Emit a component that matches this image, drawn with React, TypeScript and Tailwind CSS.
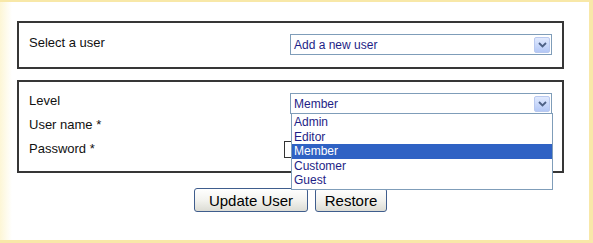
import React from "react";

function Arrow() {
  return (
    <div className="w-[16px] h-[16px] rounded-[2px] border border-[#b9c9ef] bg-gradient-to-b from-[#e1eafe] to-[#b4c8f6] flex items-center justify-center">
      <svg width="9" height="6" viewBox="0 0 9 6">
        <path d="M1 1 L4.5 4.5 L8 1" fill="none" stroke="#4d6185" strokeWidth="1.8" />
      </svg>
    </div>
  );
}

function Select({ value }: { value: string }) {
  return (
    <div className="w-[262px] h-[21px] border border-[#7f9db9] bg-white flex items-center justify-between pl-[3px] pr-[1px]">
      <span className="text-[12px] text-[#1e1e86]">{value}</span>
      <Arrow />
    </div>
  );
}

export default function App() {
  const items = ["Admin", "Editor", "Member", "Customer", "Guest"];
  return (
    <div
      className="relative w-[593px] h-[243px] bg-white border-t-[2px] border-r-[4px] border-b-[3px] border-[#f8e8a8] overflow-hidden"
      style={{ fontFamily: '"Liberation Sans", Arial, sans-serif' }}
    >
      <div className="absolute left-0 top-0 bottom-0 w-[12px] bg-gradient-to-r from-[#fdf6d6] to-white pointer-events-none" />
      <div className="relative pt-[19px] pl-[17px]">
        <div className="w-[547px] h-[48px] border-2 border-[#363636] flex items-start">
          <div className="w-[271px] pl-[10px] pt-[10px] text-[13px] text-[#111]">Select a user</div>
          <div className="pt-[11px]">
            <Select value="Add a new user" />
          </div>
        </div>
        <div className="mt-[11px] w-[547px] h-[93px] border-2 border-[#363636] relative">
          <div className="flex items-start">
            <div className="w-[271px] pl-[10px] pt-[9px] text-[13px] text-[#111]">Level</div>
            <div className="pt-[11px]">
              <Select value="Member" />
            </div>
          </div>
          <div className="flex items-start mt-[3px]">
            <div className="w-[285px] pl-[10px] text-[13px] text-[#111] leading-[16px]">User name *</div>
            <div className="w-[200px] h-[17px] border border-[#333] bg-white" />
          </div>
          <div className="flex items-start mt-[7px]">
            <div className="w-[265px] pl-[10px] text-[13px] text-[#111] leading-[16px]">Password *</div>
            <div className="w-[200px] h-[17px] border border-[#333] bg-white" />
          </div>
          <div className="absolute z-10 left-[272px] top-[31px] w-[262px] border border-[#7f9db9] bg-white py-[1px]">
            {items.map((it) => (
              <div
                key={it}
                className={
                  it === "Member"
                    ? "h-[14.6px] leading-[14.6px] pl-[2px] text-[12px] bg-[#2f62c4] text-white"
                    : "h-[14.6px] leading-[14.6px] pl-[2px] text-[12px] text-[#1e1e86]"
                }
              >
                {it}
              </div>
            ))}
          </div>
        </div>
        <div className="w-[547px] flex justify-center gap-[7px] mt-[15px]">
          <button className="w-[114px] h-[24px] rounded-[3px] border border-[#3f5d8d] bg-gradient-to-b from-white via-[#f3f3ef] to-[#dcdcd4] text-[15px] text-black leading-none">
            Update User
          </button>
          <button className="w-[72px] h-[24px] rounded-[3px] border border-[#3f5d8d] bg-gradient-to-b from-white via-[#f3f3ef] to-[#dcdcd4] text-[15px] text-black leading-none">
            Restore
          </button>
        </div>
      </div>
    </div>
  );
}
